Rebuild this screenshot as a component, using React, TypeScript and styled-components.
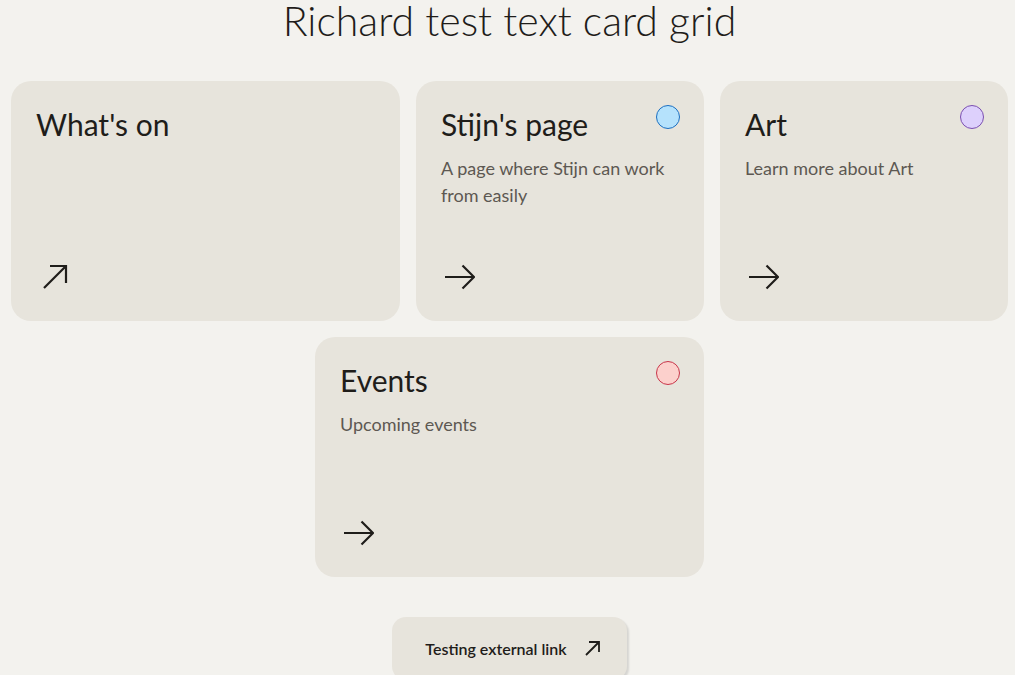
import React from 'react';
import styled, { createGlobalStyle } from 'styled-components';

const pageBg = '#f3f2ee';
const cardBg = '#e7e4dc';
const ink = '#1f1d1a';

const GlobalStyle = createGlobalStyle`
  html, body {
    margin: 0;
    padding: 0;
    background: ${pageBg};
    font-family: Lato, "Noto Sans", sans-serif;
    color: ${ink};
  }
`;

const Page = styled.main`
  display: flex;
  flex-direction: column;
  align-items: center;
  padding: 0 7px 0 11px;
`;

const Title = styled.h1`
  margin: 0;
  font-size: 41px;
  font-weight: 300;
  line-height: 42px;
  letter-spacing: 0;
`;

const Grid = styled.div`
  display: flex;
  flex-wrap: wrap;
  justify-content: center;
  gap: 16px;
  margin-top: 39px;
  width: 100%;
`;

const CardBox = styled.a<{ $wide?: boolean }>`
  position: relative;
  box-sizing: border-box;
  width: ${p => (p.$wide ? 389 : 288)}px;
  height: 240px;
  padding: 24px 25px 31px;
  background: ${cardBg};
  border-radius: 20px;
  display: flex;
  flex-direction: column;
  text-decoration: none;
  color: ${ink};
`;

const CardTitle = styled.h2`
  margin: 0;
  font-size: 30px;
  font-weight: 400;
  line-height: 38px;
`;

const CardText = styled.p`
  margin: 12px 0 0;
  font-size: 18px;
  line-height: 27px;
  color: #5d5852;
  max-width: 236px;
`;

const IconSlot = styled.div`
  margin-top: auto;
  display: flex;
`;

const Dot = styled.span<{ $fill: string; $line: string }>`
  position: absolute;
  top: 24px;
  right: 24px;
  width: 22px;
  height: 22px;
  border-radius: 50%;
  background: ${p => p.$fill};
  border: 1px solid ${p => p.$line};
`;

const LinkButton = styled.a`
  display: flex;
  align-items: center;
  gap: 18px;
  margin-top: 40px;
  padding: 22px 27px 22px 33px;
  background: ${cardBg};
  border-radius: 14px;
  box-shadow: 2px 2px 2px rgba(0, 0, 0, 0.12);
  font-size: 16px;
  font-weight: 600;
  color: ${ink};
  text-decoration: none;
`;

const ArrowRight = () => (
  <svg width="34" height="26" viewBox="0 0 34 26" fill="none" stroke={ink} strokeWidth="2.2">
    <path d="M4 13h29M21.5 1.5L33 13 21.5 24.5" />
  </svg>
);

const ArrowUpRight = () => (
  <svg width="34" height="26" viewBox="0 0 34 26" fill="none" stroke={ink} strokeWidth="2.2">
    <path d="M8 24L30 2M14 2h16v17" />
  </svg>
);

const SmallArrowUpRight = () => (
  <svg width="15" height="15" viewBox="0 0 15 15" fill="none" stroke={ink} strokeWidth="1.8">
    <path d="M1 14L14 1M4 1h10v10" />
  </svg>
);

interface ICard {
  title: string;
  text?: string;
  wide?: boolean;
  dot?: [string, string];
  external?: boolean;
}

const Card = ({ title, text, wide, dot, external }: ICard) => (
  <CardBox $wide={wide} href="#">
    <CardTitle>{title}</CardTitle>
    {text && <CardText>{text}</CardText>}
    {dot && <Dot $fill={dot[0]} $line={dot[1]} />}
    <IconSlot>{external ? <ArrowUpRight /> : <ArrowRight />}</IconSlot>
  </CardBox>
);

function App() {
  return (
    <>
      <GlobalStyle />
      <Page>
        <Title>Richard test text card grid</Title>
        <Grid>
          <Card title="What's on" wide external />
          <Card title="Stijn's page" text="A page where Stijn can work from easily" dot={['#b5e2fc', '#1d6fc0']} />
          <Card title="Art" text="Learn more about Art" dot={['#ddd0fc', '#7b4fb0']} />
          <Card title="Events" text="Upcoming events" wide dot={['#fcd0cc', '#c8364a']} />
        </Grid>
        <LinkButton href="#">
          Testing external link
          <SmallArrowUpRight />
        </LinkButton>
      </Page>
    </>
  );
}

export default App;
